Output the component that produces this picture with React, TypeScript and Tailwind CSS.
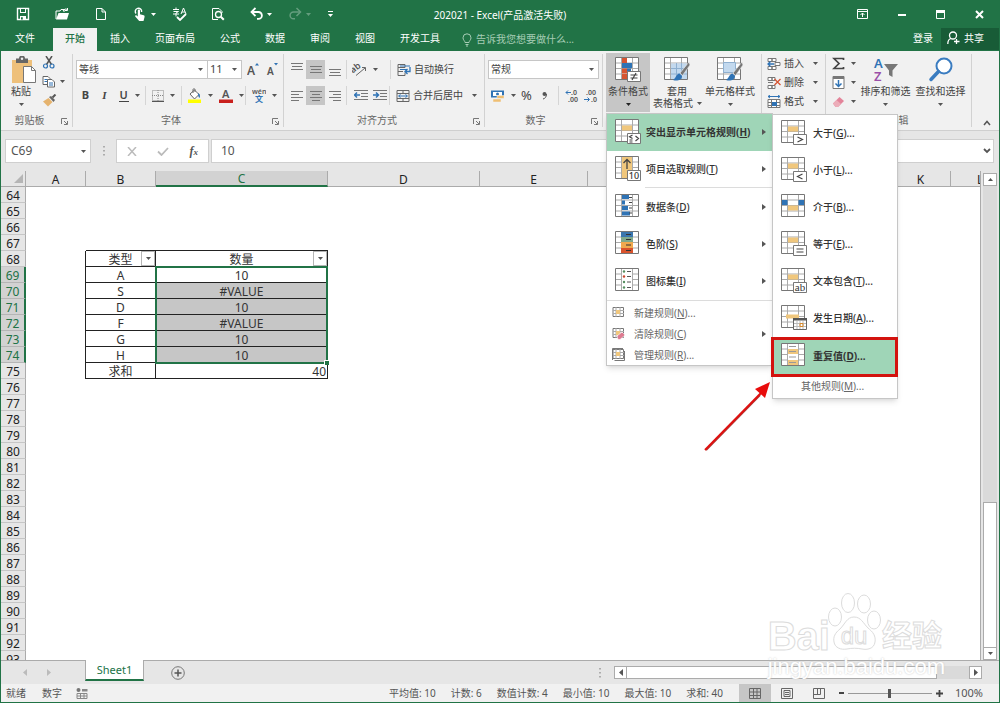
import React from "react";

type Kids = { children?: React.ReactNode };

const Caret = ({ tone = "text-[#555]" }: { tone?: string }) => (
  <svg className={`h-[3px] w-[5px] shrink-0 ${tone}`} viewBox="0 0 5 3" fill="currentColor">
    <path d="M0 0h5L2.500 3z" />
  </svg>
);

const Svg = ({ w, h, children, className = "" }: Kids & { w: number; h: number; className?: string }) => (
  <svg width={w} height={h} viewBox={`0 0 ${w} ${h}`} fill="none" className={`shrink-0 ${className}`}>
    {children}
  </svg>
);

/* ---------- title bar ---------- */

const quick: { label: string; caret?: boolean; dim?: boolean; icon: React.ReactNode }[] = [
  {
    label: "保存",
    icon: (
      <Svg w={14} h={14}>
        <path d="M1.500 1.500h11v11h-11z" stroke="#fff" strokeWidth="1.400" />
        <path d="M4 1h6v5H4zM4 9h6v4H4z" fill="#fff" />
        <path d="M5 2h4v3H5zM5 10.300h1.800v2.200H5z" fill="#217346" />
      </Svg>
    ),
  },
  {
    label: "打开",
    icon: (
      <Svg w={15} h={14}>
        <path d="M1 12V4h4l1-1.500h3V5" stroke="#fff" />
        <path d="M1 12.500 3.500 6H14l-2 6.500z" fill="#fff" />
        <path d="M8 4c1-2 3-2.500 4-1.500M12.500 1v2.500H10" stroke="#fff" />
      </Svg>
    ),
  },
  {
    label: "新建",
    icon: (
      <Svg w={14} h={14}>
        <path d="M2.500 1.500H8l3.500 3.500v7.500h-9z" stroke="#fff" />
        <path d="M8 1.500V5h3.500" stroke="#fff" />
      </Svg>
    ),
  },
  {
    label: "触摸模式",
    caret: true,
    icon: (
      <Svg w={14} h={14}>
        <path d="M3 6.500A3.200 3.200 0 1 1 8.600 5" stroke="#fff" strokeWidth="1.400" />
        <path d="M4.800 3.500c0-1.200 2.200-1.200 2.200 0v3.800l3.700.9c1 .3 1 1.200.8 2L10.500 14H6.200L2.200 9.500c-.3-.9.7-1.400 1.400-1l1.200 1z" fill="#fff" />
      </Svg>
    ),
  },
  {
    label: "拼写检查",
    icon: (
      <Svg w={15} h={14}>
        <path d="M1 2.500h6M4 .5v2M1.500 4.500h5L4 6v3.500M1 7h6M9 7l2.500-6L14 7M10 5h3" stroke="#fff" />
        <path d="m5 10 3 3 6-6" stroke="#fff" strokeWidth="1.800" />
      </Svg>
    ),
  },
  {
    label: "打印预览",
    icon: (
      <Svg w={14} h={14}>
        <path d="M7 12.500H1.500v-11H8l3 3V6" stroke="#fff" />
        <circle cx="7.500" cy="7.500" r="3" stroke="#fff" strokeWidth="1.300" />
        <path d="m9.800 9.800 3 3" stroke="#fff" strokeWidth="2" />
      </Svg>
    ),
  },
  {
    label: "撤消",
    caret: true,
    icon: (
      <Svg w={13} h={14}>
        <path d="M2 5h6.500a3.200 3.200 0 0 1 0 6.800H7" stroke="#fff" strokeWidth="1.800" />
        <path d="M5.500 1 1.500 5l4 4" stroke="#fff" strokeWidth="1.800" />
      </Svg>
    ),
  },
  {
    label: "恢复",
    caret: true,
    dim: true,
    icon: (
      <Svg w={13} h={14} className="opacity-30">
        <path d="M11 5H4.500a3.200 3.200 0 0 0 0 6.800H6" stroke="#fff" strokeWidth="1.500" />
        <path d="m7.500 1 4 4-4 4" stroke="#fff" strokeWidth="1.500" />
      </Svg>
    ),
  },
  {
    label: "自定义快速访问工具栏",
    icon: (
      <Svg w={5} h={7}>
        <path d="M0 .5h5" stroke="#fff" />
        <path d="M0 3h5L2.500 6z" fill="#fff" />
      </Svg>
    ),
  },
];

const windowButtons: { label: string; icon: React.ReactNode }[] = [
  {
    label: "功能区显示选项",
    icon: (
      <Svg w={11} h={10}>
        <path d="M.5.5h10v9H.5zM.5 2.500h10M5.500 8V4M3.500 6l2-2 2 2" stroke="#fff" />
      </Svg>
    ),
  },
  {
    label: "最小化",
    icon: (
      <Svg w={8} h={10}>
        <path d="M0 6h8" stroke="#fff" strokeWidth="2" />
      </Svg>
    ),
  },
  {
    label: "最大化",
    icon: (
      <Svg w={9} h={9}>
        <path d="M.5.5h8v8h-8z" stroke="#fff" />
        <path d="M0 0h9v3H0z" fill="#fff" />
      </Svg>
    ),
  },
  {
    label: "关闭",
    icon: (
      <Svg w={9} h={9}>
        <path d="m1 1 7 7M8 1 1 8" stroke="#fff" strokeWidth="2" />
      </Svg>
    ),
  },
];

function TitleBar() {
  return (
    <header className="grid h-7 grid-cols-[1fr_auto_1fr] items-center">
      <div className="flex items-center pl-[3px]">
        {quick.map((q) => (
          <button key={q.label} aria-label={q.label} className="flex h-7 w-[39px] items-center gap-1 pl-3">
            {q.icon}
            {q.caret && <Caret tone={q.dim ? "text-white/30" : "text-white"} />}
          </button>
        ))}
      </div>
      <h1 className="pt-0.5 text-[10px] leading-4">202021 - Excel(产品激活失败)</h1>
      <div className="flex justify-end">
        {windowButtons.map((b) => (
          <button key={b.label} aria-label={b.label} className="flex h-7 w-[39px] items-center justify-center">
            {b.icon}
          </button>
        ))}
      </div>
    </header>
  );
}

function TabBar() {
  return (
    <nav className="flex h-[23px] items-stretch text-[10px]">
      <button className="w-[52px] pb-0.5 pr-1">文件</button>
      <div className="flex gap-px">
        <button className="bg-[#f1f1f1] px-3 pb-0.5 font-medium text-[#217346]">开始</button>
        {["插入", "页面布局", "公式", "数据", "审阅", "视图", "开发工具"].map((t) => (
          <button key={t} className="px-3 pb-0.5">
            {t}
          </button>
        ))}
      </div>
      <button className="flex items-center gap-1 pl-2.5 text-[#a6cdb5]">
        <Svg w={10} h={14}>
          <path d="M3 9.500C3 8 1 7 1 4.800a4 4 0 0 1 8 0C9 7 7 8 7 9.500zM3.500 11.500h3M4 13h2" stroke="currentColor" />
        </Svg>
        告诉我您想要做什么...
      </button>
      <div className="ml-auto flex items-stretch gap-2">
        <button className="pb-0.5">登录</button>
        <button className="mb-px flex w-[58px] items-center gap-1 bg-[#185c37] pb-0.5 pl-1.5">
          <Svg w={13} h={14}>
            <circle cx="6" cy="4.500" r="3.500" stroke="#fff" strokeWidth="1.300" />
            <path d="M.8 13c0-3 1.500-5 3.200-5.500M9.500 8v5M7 10.500h5.500" stroke="#fff" strokeWidth="1.300" />
          </Svg>
          共享
        </button>
      </div>
    </nav>
  );
}

/* ---------- ribbon ---------- */

const Launcher = () => (
  <button aria-label="更多设置" className="absolute bottom-0.5 right-1 text-[#777]">
    <Svg w={7} h={7}>
      <path d="M.5 6V.5H6M3 3l3 3M6.500 3v3.500H3" stroke="currentColor" />
    </Svg>
  </button>
);

function Group({ label, width, launcher, children }: Kids & { label: string; width: string; launcher?: boolean }) {
  return (
    <section aria-label={label} className={`relative flex flex-col border-r border-[#d2d2d2] ${width}`}>
      <div className="h-[57px]">{children}</div>
      <div className="mt-0.5 text-center text-[10px] leading-[14px] text-[#666]">{label}</div>
      {launcher && <Launcher />}
    </section>
  );
}

function Pick({ label, value, className }: { label: string; value: string; className: string }) {
  return (
    <label className={`relative flex h-[19px] shrink-0 items-center border border-[#c6c6c6] bg-white ${className}`}>
      <select aria-label={label} defaultValue={value} className="h-full w-full appearance-none bg-transparent px-0.5 outline-none">
        <option>{value}</option>
      </select>
      <span className="pointer-events-none absolute right-1 flex">
        <Caret />
      </span>
    </label>
  );
}

const Rule = () => <span className="h-[19px] w-px shrink-0 bg-[#d5d5d5]" />;

function Tool({ label, w = "w-[19px]", on, caret, children }: Kids & { label: string; w?: string; on?: boolean; caret?: boolean }) {
  return (
    <button
      aria-label={label}
      className={`flex h-[19px] shrink-0 items-center justify-center gap-1.5 ${w} ${on ? "bg-[#c6c6c6]" : ""}`}
    >
      {children}
      {caret && <Caret />}
    </button>
  );
}

const Lines = ({ rows }: { rows: [number, number, number][] }) => (
  <Svg w={12} h={13}>
    {rows.map(([x, y, w]) => (
      <path key={y} d={`M${x} ${y}.5h${w}`} stroke="#777" />
    ))}
  </Svg>
);

const Indent = ({ flip }: { flip?: boolean }) => (
  <Svg w={14} h={12}>
    <path d="M0 .5h14M7 3.500h7M7 6.500h7M0 9.500h14" stroke="#777" />
    {flip ? (
      <path d="M0 5h5M3 2.500 5.500 5 3 7.500" stroke="#2f73b5" strokeWidth="1.500" />
    ) : (
      <path d="M1 5h5M3 2.500.5 5 3 7.500" stroke="#2f73b5" strokeWidth="1.500" />
    )}
  </Svg>
);

function Clipboard() {
  return (
    <Group label="剪贴板" width="w-[72px] pr-3.5" launcher>
      <div className="flex pl-2.5 pt-0.5">
        <button className="-mr-1 flex w-7 flex-col items-start text-[10px] leading-3">
          <Svg w={25} h={28}>
            <path d="M1 4h20v23H1z" fill="#eec07b" />
            <path d="M5 2.500h3a3 3 0 0 1 6 0h3V7H5z" fill="#666" />
            <circle cx="11" cy="2.800" r="1.200" fill="#f1f1f1" />
            <path d="M12.500 10.500h8l4 4v12h-12z" fill="#fff" stroke="#777" />
            <path d="M20.500 10.500v4h4" stroke="#777" />
          </Svg>
          <span className="mt-px">粘贴</span>
          <span className="mt-1.5 w-5 pl-2">
            <Caret />
          </span>
        </button>
        <div className="flex flex-col items-start gap-1.5 pl-2.5">
          <button aria-label="剪切">
            <Svg w={14} h={13}>
              <path d="m4 0 5.500 8.500M10 0 4.500 8.500" stroke="#555" strokeWidth="1.500" />
              <circle cx="3.500" cy="10" r="2" stroke="#2f73b5" strokeWidth="1.200" />
              <circle cx="10" cy="10" r="2" stroke="#2f73b5" strokeWidth="1.200" />
            </Svg>
          </button>
          <button aria-label="复制" className="flex items-center gap-1">
            <Svg w={14} h={13}>
              <path d="M1 1.500h5l2 2v6H1z" fill="#fff" stroke="#666" />
              <path d="M2.500 4.500h3M2.500 6.500h3" stroke="#2f73b5" />
              <path d="M5.500 4.500H10l2.500 2.500v5h-7z" fill="#fff" stroke="#666" />
              <path d="M7 8h4M7 10h4" stroke="#2f73b5" />
            </Svg>
            <Caret />
          </button>
          <button aria-label="格式刷">
            <Svg w={15} h={13}>
              <path d="M1 7.500 6.500 4l4 4L6 12.500z" fill="#e5b36e" />
              <path d="m7 3 2-1 4 4-1.500 2z" fill="#666" />
              <path d="m10.500 3.500 3-3" stroke="#555" strokeWidth="2" />
            </Svg>
          </button>
        </div>
      </div>
    </Group>
  );
}

function FontGroup() {
  return (
    <Group label="字体" width="w-[211px] pr-3.5" launcher>
      <div className="flex pl-[3px] pt-1.5">
        <Pick label="字体" value="等线" className="w-[132px] text-[10px]" />
        <Pick label="字号" value="11" className="-ml-px w-[35px] text-[11px]" />
        <Tool label="增大字号" w="ml-0.5 w-[19px]">
          <Svg w={13} h={15}>
            <text x="0" y="13" fontSize="12" fontWeight="600" fill="#555">A</text>
            <path d="m8 3.500 2-2.500 2 2.500z" fill="#2f73b5" />
          </Svg>
        </Tool>
        <Tool label="减小字号">
          <Svg w={13} h={15}>
            <text x="1" y="13" fontSize="10" fontWeight="600" fill="#555">A</text>
            <path d="m8 1 2 2.500L12 1z" fill="#2f73b5" />
          </Svg>
        </Tool>
      </div>
      <div className="flex items-center pl-[3px] pt-[7px] text-[11px] text-[#444]">
        <Tool label="加粗"><b>B</b></Tool>
        <Tool label="倾斜"><i className="font-['Liberation_Serif'] font-bold">I</i></Tool>
        <Tool label="下划线" w="w-[31px]" caret><span className="border-b border-[#444] pr-px font-semibold leading-3">U</span></Tool>
        <span className="w-1" />
        <Rule />
        <Tool label="边框" w="w-[35px]" caret>
          <Svg w={12} h={12}>
            <path d="M.5.5h11v10H.5zM6 0v11M0 5.500h12" stroke="#888" strokeDasharray="1 1" />
            <path d="M0 11.500h12" stroke="#555" />
          </Svg>
        </Tool>
        <Rule />
        <Tool label="填充颜色" w="w-[35px]" caret>
          <Svg w={15} h={15}>
            <path d="m3 6 4.500-4L12 6.500 7.500 11z" fill="#fff" stroke="#666" />
            <path d="M6 5V1.500c0-1 2-1 2 0V4" stroke="#666" />
            <path d="M11 5c2 1 2.500 3 1.500 5-1-1-1.500-2-1.500-5z" fill="#2f73b5" />
            <path d="M1 11.500h13V15H1z" fill="#ff0" />
          </Svg>
        </Tool>
        <Tool label="字体颜色" w="w-7" caret>
          <Svg w={14} h={15}>
            <text x="3" y="10" fontSize="11" fontWeight="600" fill="#555">A</text>
            <path d="M0 11.500h14V15H0z" fill="#c9201d" />
          </Svg>
        </Tool>
        <Rule />
        <Tool label="拼音" w="w-9" caret>
          <Svg w={14} h={15}>
            <text x="0" y="6" fontSize="7" fontWeight="600" fill="#555">wén</text>
            <text x="3" y="14" fontSize="8" fontWeight="700" fill="#2f73b5">文</text>
          </Svg>
        </Tool>
      </div>
    </Group>
  );
}

function AlignGroup() {
  return (
    <Group label="对齐方式" width="w-[201px] pr-3.5" launcher>
      <div className="flex items-center pl-[3px] pt-1.5 text-[10px]">
        <Tool label="顶端对齐"><Lines rows={[[0, 0, 12], [1, 3, 10], [0, 6, 12]]} /></Tool>
        <Tool label="垂直居中" on><Lines rows={[[0, 3, 12], [1, 6, 10], [0, 9, 12]]} /></Tool>
        <Tool label="底端对齐"><Lines rows={[[0, 6, 12], [1, 9, 10], [0, 12, 12]]} /></Tool>
        <span className="w-0.5" />
        <Rule />
        <Tool label="方向" w="w-[35px]" caret>
          <Svg w={15} h={13}>
            <text x="0" y="8" fontSize="9" fontWeight="600" fill="#555" transform="rotate(-38 4 8)">ab</text>
            <path d="M4 12.500 13 5M10 4.500l3.500 0v3.500" stroke="#666" />
          </Svg>
        </Tool>
        <span className="w-2" />
        <Rule />
        <button className="flex items-center gap-[3px] pl-1.5">
          <Svg w={14} h={14}>
            <path d="M1 1.500h7v3H1zM1 4.500v8h7v-3M1 8.500h5" stroke="#666" />
            <path d="M3 3h10M3 6.500h7" stroke="#2f73b5" />
            <path d="M13 4v4.500H8M10.500 6 8 8.500l2.500 2.500" stroke="#2f73b5" strokeWidth="1.300" />
          </Svg>
          自动换行
        </button>
      </div>
      <div className="flex w-[198px] items-center pl-[3px] pt-[7px] text-[10px]">
        <Tool label="左对齐"><Lines rows={[[0, 2, 12], [0, 5, 8], [0, 8, 12], [0, 11, 8]]} /></Tool>
        <Tool label="居中" on><Lines rows={[[0, 2, 12], [2, 5, 8], [0, 8, 12], [2, 11, 8]]} /></Tool>
        <Tool label="右对齐"><Lines rows={[[0, 2, 12], [4, 5, 8], [0, 8, 12], [4, 11, 8]]} /></Tool>
        <span className="w-0.5" />
        <Rule />
        <span className="w-1" />
        <Tool label="减少缩进量"><Indent /></Tool>
        <Tool label="增加缩进量"><Indent flip /></Tool>
        <Rule />
        <button className="flex items-center gap-[3px] whitespace-nowrap pl-1.5">
          <Svg w={14} h={14}>
            <path d="M1 1.500h12v11H1zM1 4.500h12M1 9.500h12M7 1.500v3M7 9.500v3" stroke="#666" />
            <path d="M3 7h8" stroke="#2f73b5" />
            <path d="m4.500 5.500-2 1.500 2 1.500M9.500 5.500l2 1.500-2 1.500" stroke="#2f73b5" />
          </Svg>
          合并后居中
          <span className="pl-1.5"><Caret /></span>
        </button>
      </div>
    </Group>
  );
}

const Decimals = ({ inc }: { inc?: boolean }) => (
  <Svg w={14} h={14}>
    <text x={inc ? 6 : 2} y="6" fontSize="7" fontWeight="600" fill="#555">{inc ? ".0" : ".00"}</text>
    <text x={inc ? 3 : 7} y="13" fontSize="7" fontWeight="600" fill="#555">{inc ? ".00" : ".0"}</text>
    {inc ? (
      <path d="M1 3.500h5M3 1.500l-2 2 2 2" stroke="#2f73b5" />
    ) : (
      <path d="M0 10.500h5M3.500 8.500l2 2-2 2" stroke="#2f73b5" />
    )}
  </Svg>
);

function NumberGroup() {
  return (
    <Group label="数字" width="w-[118px] pr-4" launcher>
      <div className="pl-[3px] pt-1.5">
        <Pick label="数字格式" value="常规" className="w-[111px] text-[10px]" />
      </div>
      <div className="flex w-[114px] items-center pl-1 pt-[7px] text-[#444]">
        <Tool label="会计数字格式" w="w-7" caret>
          <Svg w={15} h={14}>
            <path d="M1 1.500h13v7H1z" fill="#2f73b5" />
            <path d="M3 3h9v4H3z" fill="#fff" />
            <circle cx="7.500" cy="5" r="1.500" fill="#2f73b5" />
            <path d="M7 6.500h7v3H7zM3 10h8v3H3z" fill="#efbf73" stroke="#f1f1f1" strokeWidth=".5" />
          </Svg>
        </Tool>
        <Tool label="百分比"><span className="text-[13px]">%</span></Tool>
        <Tool label="千位分隔" w="w-4">
          <Svg w={5} h={8}>
            <circle cx="2.500" cy="2" r="2" fill="#555" />
            <path d="M4.500 2C4.500 5 3 6.500 1 7" stroke="#555" />
          </Svg>
        </Tool>
        <span className="w-1.5 shrink-0" />
        <Rule />
        <span className="w-[3px] shrink-0" />
        <Tool label="增加小数位"><Decimals inc /></Tool>
        <Tool label="减少小数位"><Decimals /></Tool>
      </div>
    </Group>
  );
}

/* grid picture shared by the style buttons and the menus */
function Sheet({ children, size = 26 }: Kids & { size?: number }) {
  return (
    <svg width={size} height={size} viewBox="0 0 26 26" fill="none" className="shrink-0">
      <path d="M.5.5h23v22H.5z" fill="#fff" />
      <path d="M6.500 1v21M17.500 1v21M1 6h22M1 11.500h22M1 17h22" stroke="#aaa" />
      <path d="M.5.5h23v22H.5z" stroke="#777" />
      {children}
    </svg>
  );
}

const Mid = () => <path d="M7 6.500h10v5H7z" fill="#f0c77d" />;

const BadgeBox = () => <path d="M12.500 14.500h13v10h-13z" fill="#fff" stroke="#777" />;

const Badge = ({ t, serif }: { t: string; serif?: boolean }) => (
  <>
    <BadgeBox />
    <text x="19" y="23" fontSize={serif ? 11 : 9} textAnchor="middle" fill="#333" fontWeight="500" fontFamily={serif ? "Liberation Serif" : undefined}>
      {t}
    </text>
  </>
);

const Sign = ({ d }: { d: string }) => (
  <>
    <BadgeBox />
    <path d={d} stroke="#444" strokeWidth="1.200" />
  </>
);

const Brush = () => (
  <>
    <path d="m25 5-9 11 2.500 2.500L26 8z" fill="#777" stroke="#f1f1f1" strokeWidth=".6" />
    <path d="M15.500 16.500c-3 0-3 4-6.500 6.500 4 1.500 9 0 9-4z" fill="#2f73b5" />
  </>
);

const K = ({ pre, k, post }: { pre: string; k: string; post: string }) => (
  <span>
    {pre}(<u className="underline-offset-1">{k}</u>){post}
  </span>
);

const Arrow = () => (
  <svg className="ml-auto h-1.5 w-1 shrink-0" viewBox="0 0 4 6" fill="#555">
    <path d="M0 0v6l4-3z" />
  </svg>
);

const ruleItems = [
  { pre: "突出显示单元格规则", k: "H", icon: <Sheet><Mid /><Sign d="m17.500 16-3 1.800 3 1.800M14.500 21h3M14.500 23h3M20.500 17l3 2.500-3 2.500" /></Sheet> },
  {
    pre: "项目选取规则",
    k: "T",
    icon: (
      <Sheet>
        <path d="M7 1h10v21H7z" fill="#f0c77d" />
        <path d="M12 13V4M8.500 7 12 3.500 15.500 7" stroke="#444" strokeWidth="1.300" />
        <Badge t="10" />
      </Sheet>
    ),
  },
];

const scaleItems = [
  {
    pre: "数据条",
    k: "D",
    icon: (
      <Sheet>
        <path d="M7 1h7v4H7zM7 6.500h3v4H7zM7 12h6v4H7zM7 17.500h8v4H7z" fill="#2f73b5" />
        <path d="M14 3.500h3M14 8.500h3M14 14h3M14 19h3" stroke="#444" />
      </Sheet>
    ),
  },
  {
    pre: "色阶",
    k: "S",
    icon: (
      <Sheet>
        <path d="M6 1h12v5H6z" fill="#3a76ae" />
        <path d="M6 6h12v5H6z" fill="#7fa88b" />
        <path d="M6 11h12v6H6z" fill="#f0a94e" />
        <path d="M6 17h12v5H6z" fill="#d9532c" />
        <path d="M11 3.500h5M11 8.500h5M11 14h5M11 19.500h5" stroke="#333" />
      </Sheet>
    ),
  },
  {
    pre: "图标集",
    k: "I",
    icon: (
      <Sheet>
        <path d="M7 1h10v21H7z" fill="#fff" />
        <path d="M12 3.500h4M12 8.500h4M12 14h4M12 19.500h4" stroke="#555" />
        <circle cx="9" cy="3.500" r="1.200" fill="#548f5f" />
        <circle cx="9" cy="8.500" r="1.200" fill="#c9452b" />
        <circle cx="9" cy="14" r="1.200" fill="#548f5f" />
        <circle cx="9" cy="19.500" r="1.200" fill="#548f5f" />
      </Sheet>
    ),
  },
];

const MiniGrid = ({ children }: Kids) => (
  <Svg w={13} h={13}>
    <path d="M1 1.500h10.500v9H1z" fill="#fff" stroke="#777" />
    <path d="M4 1v10M8 1v10M1 4.500h11M1 7.500h11" stroke="#aaa" />
    <path d="M4 4h4v4H4z" fill="#f0c77d" />
    {children}
  </Svg>
);

const manageItems = [
  { pre: "新建规则", k: "N", post: "...", sub: false, icon: <MiniGrid /> },
  {
    pre: "清除规则",
    k: "C",
    post: "",
    sub: true,
    icon: (
      <MiniGrid>
        <path d="m5 9 5-4 3 3-5 4.500H6z" fill="#dd7a90" stroke="#fff" strokeWidth=".6" />
      </MiniGrid>
    ),
  },
  {
    pre: "管理规则",
    k: "R",
    post: "...",
    sub: false,
    icon: (
      <MiniGrid>
        <path d="M.5 12V.5H11M2.500 12.500h10V3" stroke="#777" />
      </MiniGrid>
    ),
  },
];

const highlightItems = [
  { pre: "大于", k: "G", icon: <Sheet><Mid /><Sign d="m16.500 17 5 2.500-5 2.500" /></Sheet> },
  { pre: "小于", k: "L", icon: <Sheet><Mid /><Sign d="m21.500 17-5 2.500 5 2.500" /></Sheet> },
  {
    pre: "介于",
    k: "B",
    icon: (
      <Sheet>
        <path d="M1 6h5.500v5H1zM17.500 6H23v5h-5.500z" fill="#2f73b5" />
        <path d="M7 11.500h10v5H7z" fill="#f0c77d" />
      </Sheet>
    ),
  },
  { pre: "等于", k: "E", icon: <Sheet><Mid /><Sign d="M15.500 18h7M15.500 21h7" /></Sheet> },
  { pre: "文本包含", k: "T", icon: <Sheet><Mid /><Badge t="ab" serif /></Sheet> },
  {
    pre: "发生日期",
    k: "A",
    icon: (
      <Sheet>
        <path d="M5 9.500h13v4H5z" fill="#f0c77d" />
        <path d="M12.500 13.500h13v11h-13z" fill="#fff" stroke="#666" />
        <path d="M12 13h14v2.500H12z" fill="#555" />
        <path d="M16 16v8M19 16v8M22 16v8M13 18.500h12M13 21.500h12" stroke="#bbb" />
        <path d="M19 18.500h3v3h-3z" stroke="#d98a2b" />
      </Sheet>
    ),
  },
  {
    pre: "重复值",
    k: "D",
    icon: (
      <Sheet>
        <path d="M7 1h10v21H7z" fill="#fff" />
        <path d="M7 6h10v5H7zM7 17h10v5H7z" fill="#f0c77d" />
        <path d="M8 3.500h7M8 8.500h7M8 14h7M8 19.500h7" stroke="#999" />
      </Sheet>
    ),
  },
];

function SubMenu() {
  return (
    <div className="absolute left-full top-0 w-[126px] border border-[#c6c6c6] bg-white shadow-md">
      {highlightItems.map((it, i) =>
        i === highlightItems.length - 1 ? (
          <button
            key={it.k}
            role="menuitem"
            className="-mx-0.5 flex h-10 w-[127px] items-center gap-1.5 whitespace-nowrap border-[3px] border-[#d3130f] bg-[#9fd5b7] pb-0.5 pl-[7px] font-bold"
          >
            {it.icon}
            <K pre={it.pre} k={it.k} post="..." />
          </button>
        ) : (
          <button key={it.k} role="menuitem" className="flex h-[37px] w-full items-center gap-1.5 whitespace-nowrap pb-0.5 pl-2 font-medium">
            {it.icon}
            <K pre={it.pre} k={it.k} post="..." />
          </button>
        ),
      )}
      <button role="menuitem" className="flex h-[21px] items-start pl-7 pt-px text-[#666]">
        <K pre="其他规则" k="M" post="..." />
      </button>
      <svg className="pointer-events-none absolute right-full top-[266px] h-[72px] w-[70px]" viewBox="0 0 70 72">
        <path d="M3 69 57 14" stroke="#a8403c" strokeWidth="2" />
        <path d="M2 69 58 12" stroke="#e01010" strokeWidth="2" />
        <path d="M67 1 62 17 52 8z" fill="#e80c0c" />
      </svg>
    </div>
  );
}

function RulesMenu() {
  return (
    <div role="menu" className="absolute left-0 top-full z-20 w-[167px] border border-[#c6c6c6] bg-white text-[10px] leading-4 text-[#333] shadow-md">
      {ruleItems.map((it, i) => (
        <button
          key={it.k}
          role="menuitem"
          className={`flex h-[37px] w-full items-center gap-[5px] whitespace-nowrap pb-0.5 pl-2 pr-1.5 ${i === 0 ? "bg-[#9fd5b7] font-bold" : "font-medium"}`}
        >
          {it.icon}
          <K pre={it.pre} k={it.k} post="" />
          <Arrow />
        </button>
      ))}
      <hr className="-mt-px ml-[38px] border-[#dcdcdc]" />
      {scaleItems.map((it) => (
        <button key={it.k} role="menuitem" className="flex h-[37px] w-full items-center gap-[5px] pl-2 pr-1.5 font-medium">
          {it.icon}
          <K pre={it.pre} k={it.k} post="" />
          <Arrow />
        </button>
      ))}
      <hr className="mb-px mt-px border-[#dcdcdc]" />
      {manageItems.map((it) => (
        <button key={it.k} role="menuitem" className="flex h-[21px] w-full items-center gap-[9px] pl-[5px] pr-1.5 text-[#666]">
          {it.icon}
          <K pre={it.pre} k={it.k} post={it.post} />
          {it.sub && <Arrow />}
        </button>
      ))}
      <SubMenu />
    </div>
  );
}

function StylesGroup() {
  return (
    <section aria-label="样式" className="flex w-[159px] border-r border-[#d2d2d2] pl-[3px] text-[10px] leading-3">
      <div className="relative h-[59px]">
        <button className="-mt-px flex h-[59px] w-11 flex-col items-center bg-[#c6c6c6] pt-1" aria-expanded="true">
          <Sheet>
            <path d="M7 1h5v5H7zM7 11.500h5v5H7z" fill="#d65532" />
            <path d="M7 6h10v5H7zM12 11.500h4v5h-4z" fill="#2f73b5" />
            <path d="M7 17h5v5H7z" fill="#d65532" />
            <Sign d="M15.500 18h7M15.500 21h7M21 16l-4 7" />
          </Sheet>
          <span className="mt-0.5 whitespace-nowrap">条件格式</span>
          <span className="mt-1.5"><Caret tone="text-[#222]" /></span>
        </button>
        <RulesMenu />
      </div>
      <button className="flex w-[54px] flex-col items-center whitespace-nowrap pt-[3px]">
        <Sheet>
          <path d="M7 6.500h16v15.500H7z" fill="#c3d9ee" />
          <path d="M12.500 6v16M17.500 6v16M7 11.500h16M7 17h16" stroke="#8fb0d0" />
          <Brush />
        </Sheet>
        <span className="mt-0.5">套用</span>
        <span className="flex items-center gap-1 pl-px">表格格式 <Caret /></span>
      </button>
      <button className="flex w-[52px] flex-col items-center whitespace-nowrap pt-[3px]">
        <Sheet>
          <path d="M6.500 5.500h12v10h-12z" fill="#c3d9ee" stroke="#8fb0d0" />
          <Brush />
        </Sheet>
        <span className="mt-0.5">单元格样式</span>
        <span className="mt-1.5"><Caret /></span>
      </button>
    </section>
  );
}

const cellTools = [
  {
    t: "插入",
    icon: (
      <Svg w={14} h={14}>
        <path d="M1 1.500h4v3H1zM5 1.500h4v3H5zM1 9.500h4v3H1zM5 9.500h4v3H5zM8 5.500h5v3H8z" fill="#fff" stroke="#777" />
        <path d="M1 7h6M3.500 4.500 1 7l2.500 2.500" stroke="#2f73b5" strokeWidth="1.300" />
      </Svg>
    ),
  },
  {
    t: "删除",
    icon: (
      <Svg w={14} h={14}>
        <path d="M1 1.500h4v3H1zM5 1.500h3v3H5zM1 9.500h4v3H1zM5 9.500h3v3H5zM1 6.500h5" fill="#fff" stroke="#777" />
        <path d="m7.500 3 6 6M13.500 3l-6 6" stroke="#d65532" strokeWidth="1.300" />
      </Svg>
    ),
  },
  {
    t: "格式",
    icon: (
      <Svg w={14} h={14}>
        <path d="M1 1.500h12M3 0 1 1.500 3 3M11 0l2 1.500L11 3" stroke="#2f73b5" />
        <path d="M1 4.500h12v8H1zM1 7.500h12M1 10.500h12M4.500 4.500v8M9.500 4.500v8" fill="#fff" stroke="#777" />
        <path d="M5 7h5v4H5z" fill="#2f73b5" />
      </Svg>
    ),
  },
];

function Ribbon() {
  return (
    <div className="flex h-20 border-b border-[#cfcfcf] bg-[#f1f1f1] py-[3px] text-[#444]">
      <Clipboard />
      <FontGroup />
      <AlignGroup />
      <NumberGroup />
      <StylesGroup />
      <Group label="" width="w-16">
        <div className="flex flex-col items-start text-[10px]">
          {cellTools.map((c) => (
            <button key={c.t} className="flex h-[19px] items-center gap-[3px] pl-[5px]">
              {c.icon}
              {c.t}
              <span className="pl-1.5"><Caret /></span>
            </button>
          ))}
        </div>
      </Group>
      <Group label="编辑" width="w-[146px]">
        <div className="flex text-[10px] leading-3">
          <div className="flex w-8 flex-col pl-1">
            <Tool label="自动求和" w="w-7" caret>
              <Svg w={13} h={13}>
                <path d="M11.500 3V1.500H2l5 5-5 5h9.500V10" stroke="#444" strokeWidth="1.700" />
              </Svg>
            </Tool>
            <Tool label="填充" w="w-7" caret>
              <Svg w={13} h={13}>
                <path d="M1 .5h11v12H1z" fill="#fff" stroke="#777" />
                <path d="M1 2h11" stroke="#777" strokeWidth="2" />
                <path d="M6.500 4v6.500M3.500 7.500l3 3 3-3" stroke="#2f73b5" strokeWidth="1.500" />
              </Svg>
            </Tool>
            <Tool label="清除" w="w-7" caret>
              <Svg w={13} h={13}>
                <path d="M1 8.500 7.500 2 12 6l-6 6H3.500z" fill="#e3849a" />
                <path d="M1 8.500 4.500 5 9 9l-3 3H3.500z" fill="#ecadb9" />
              </Svg>
            </Tool>
          </div>
          <button className="flex w-[55px] flex-col items-center whitespace-nowrap pt-[3px]">
            <Svg w={26} h={26}>
              <text x="1" y="11" fontSize="13" fontWeight="600" fill="#2f73b5">A</text>
              <text x="1" y="24" fontSize="13" fontWeight="600" fill="#9a4fa8">Z</text>
              <path d="M11 7h14l-5.500 6.500V20L16 18v-4.500z" fill="#777" />
            </Svg>
            <span className="mt-0.5">排序和筛选</span>
            <span className="mt-1.5"><Caret /></span>
          </button>
          <button className="flex w-[55px] flex-col items-center whitespace-nowrap pt-[3px]">
            <Svg w={26} h={26}>
              <circle cx="16" cy="9" r="7.500" fill="#fff" stroke="#3a7cc0" strokeWidth="2" />
              <path d="M10.500 14.500 3 22.500" stroke="#3a7cc0" strokeWidth="3.500" strokeLinecap="round" />
            </Svg>
            <span className="mt-0.5">查找和选择</span>
            <span className="mt-1.5"><Caret /></span>
          </button>
        </div>
      </Group>
      <button aria-label="折叠功能区" className="ml-auto flex w-6 items-end justify-center pb-px">
        <Svg w={8} h={6}>
          <path d="m1 5 3-3.500L7 5" stroke="#555" strokeWidth="1.500" />
        </Svg>
      </button>
    </div>
  );
}

/* ---------- formula bar ---------- */

const Dots = () => (
  <Svg w={2} h={10}>
    <path d="M1 0v10" stroke="#999" strokeWidth="1.500" strokeDasharray="1.500 2.500" />
  </Svg>
);

function FormulaBar() {
  return (
    <div className="flex h-10 items-center bg-[#e6e6e6] pl-1 pr-[5px] text-[#555]">
      <div className="flex h-6 w-[86px] items-center border border-[#cfcfcf] bg-white pr-1">
        <input aria-label="名称框" defaultValue="C69" className="w-0 flex-1 bg-transparent pl-[5px] text-[12px] outline-none" />
        <Caret />
      </div>
      <span className="flex w-[25px] justify-center"><Dots /></span>
      <div className="flex h-6 w-[93px] items-center justify-between border border-[#cfcfcf] bg-white px-2.5">
        <button aria-label="取消">
          <Svg w={10} h={9}><path d="m1 0 8 9M9 0 1 9" stroke="#bbb" strokeWidth="1.500" /></Svg>
        </button>
        <button aria-label="输入">
          <Svg w={12} h={9}><path d="m1 4.500 3.500 3.500L11 1" stroke="#bbb" strokeWidth="1.800" /></Svg>
        </button>
        <button aria-label="插入函数" className="font-['Liberation_Serif'] text-[12px] font-bold italic">
          f<span className="text-[9px]">x</span>
        </button>
      </div>
      <div className="ml-0.5 flex h-6 flex-1 items-center border border-[#cfcfcf] bg-white pr-0.5">
        <input aria-label="编辑栏" defaultValue="10" className="w-0 flex-1 bg-transparent pl-[9px] text-[12px] outline-none" />
        <Svg w={8} h={6}><path d="m1 1 3 3 3-3" stroke="#555" strokeWidth="1.800" /></Svg>
      </div>
    </div>
  );
}

/* ---------- worksheet ---------- */

const columns = ["A", "B", "C", "D", "E", "F", "G", "H", "I", "J", "K", "L"];
const rows = Array.from({ length: 30 }, (_, i) => 64 + i);
const data: Record<number, [string, string]> = {
  68: ["类型", "数量"],
  69: ["A", "10"],
  70: ["S", "#VALUE"],
  71: ["D", "10"],
  72: ["F", "#VALUE"],
  73: ["G", "10"],
  74: ["H", "10"],
  75: ["求和", "40"],
};

const FilterButton = ({ label }: { label: string }) => (
  <button aria-label={label} className="absolute right-0 top-0 flex h-[15px] w-3.5 items-center justify-center border border-[#b5b5b5] bg-white">
    <Caret />
  </button>
);

function Cell({ row, col }: { row: number; col: string }) {
  const pair = data[row];
  if (col === "A") return <td className={pair ? "border-r border-[#222]" : ""} />;
  if (col !== "B" && col !== "C") return <td />;
  if (!pair) return <td className={row === 67 ? "border-b border-[#222]" : ""} />;
  const text = pair[col === "B" ? 0 : 1];
  const shaded = col === "C" && row > 69 && row < 75;
  const align = col === "C" && row === 75 ? "text-right pr-px" : "text-center";
  return (
    <td className={`relative border-b border-r border-[#222] pt-0.5 text-[#333] ${align} ${shaded ? "bg-[#c6c6c6]" : ""}`}>
      {text}
      {row === 68 && <FilterButton label={`筛选${text}`} />}
      {col === "C" && row === 69 && (
        <span className="pointer-events-none absolute -left-px -right-px -top-px z-10 h-[98px] border-2 border-[#217346]">
          <span className="absolute -bottom-[3px] -right-[3px] h-[5px] w-[5px] border-l border-t border-white bg-[#217346]" />
        </span>
      )}
    </td>
  );
}

function Worksheet() {
  return (
    <div className="flex min-h-0 flex-1 bg-[#e6e6e6]">
      <div className="min-w-0 flex-1 overflow-hidden border-r border-[#ababab] bg-white">
        <table className="w-full table-fixed border-separate border-spacing-0 text-[12px] leading-[13px] text-[#222]">
          <colgroup>
            <col className="w-[25px]" />
            <col className="w-[60px]" />
            <col className="w-[70px]" />
            <col className="w-[172px]" />
            <col className="w-[152px]" />
            <col className="w-[108px]" />
            <col className="w-[61px]" />
            <col className="w-[61px]" />
            <col className="w-[61px]" />
            <col className="w-[60px]" />
            <col className="w-[60px]" />
            <col className="w-[60px]" />
            <col />
          </colgroup>
          <thead>
            <tr className="h-4 bg-[#e6e6e6]">
              <th className="border-b border-r border-[#ababab] p-0">
                <Svg w={9} h={9} className="ml-auto mr-0.5"><path d="M9 0v9H0z" fill="#b5b5b5" /></Svg>
              </th>
              {columns.map((c) => (
                <th
                  key={c}
                  scope="col"
                  className={
                    c === "C"
                      ? "border-b-2 border-r border-b-[#217346] border-r-[#ababab] bg-[#d2d2d2] p-0 pt-px font-normal text-[#217346]"
                      : c === "L"
                        ? "overflow-hidden border-b border-[#ababab] p-0 pl-[26px] pt-0.5 text-left font-normal"
                        : "border-b border-r border-[#ababab] p-0 pt-0.5 font-normal"
                  }
                >
                  {c}
                </th>
              ))}
            </tr>
          </thead>
          <tbody>
            {rows.map((r) => (
              <tr key={r} className="h-4">
                <th
                  scope="row"
                  className={
                    r >= 69 && r <= 74
                      ? "border-b border-r-2 border-b-[#b5b5b5] border-r-[#217346] bg-[#d2d2d2] p-0 pt-0.5 font-normal text-[#217346]"
                      : "border-b border-r border-b-[#c6c6c6] border-r-[#ababab] bg-[#e6e6e6] p-0 pt-0.5 font-normal"
                  }
                >
                  {r}
                </th>
                {columns.map((c) => (
                  <Cell key={c} row={r} col={c} />
                ))}
              </tr>
            ))}
          </tbody>
        </table>
      </div>
      <div className="flex w-[18px] flex-col px-0.5 pt-0.5">
        <button aria-label="向上滚动" className="flex h-[13px] w-3.5 shrink-0 items-center justify-center border border-[#ababab] bg-white">
          <span className="rotate-180"><Caret /></span>
        </button>
        <div className="flex w-3.5 flex-1 flex-col justify-end bg-[#dadada]">
          <div className="h-[146px] border border-[#ababab] bg-white" />
        </div>
        <button aria-label="向下滚动" className="-mt-px flex h-[13px] w-3.5 shrink-0 items-center justify-center border border-[#ababab] bg-white">
          <Caret />
        </button>
      </div>
    </div>
  );
}

const Side = ({ left, tone }: { left?: boolean; tone: string }) => (
  <svg className={`h-[7px] w-1 ${tone}`} viewBox="0 0 4 7" fill="currentColor">
    <path d={left ? "M4 0v7L0 3.500z" : "M0 0v7l4-3.500z"} />
  </svg>
);

function SheetTabs() {
  return (
    <div className="flex h-6 items-stretch border-t border-[#ababab] bg-[#e6e6e6]">
      <div className="flex w-[84px] items-center gap-5 pl-[22px]">
        <button aria-label="上一张"><Side left tone="text-[#bbb]" /></button>
        <button aria-label="下一张"><Side tone="text-[#bbb]" /></button>
      </div>
      <button className="-mt-px mb-[3px] w-[59px] border-x border-b-2 border-x-[#ababab] border-b-[#217346] bg-white pt-0.5 text-[11px] text-[#217346]">Sheet1</button>
      <button aria-label="新工作表" className="ml-[27px] flex items-center">
        <Svg w={14} h={14}>
          <circle cx="7" cy="7" r="6.300" stroke="#777" />
          <path d="M7 3.500v7M3.500 7h7" stroke="#555" strokeWidth="1.500" />
        </Svg>
      </button>
      <div className="ml-auto flex items-center pr-[17px]">
        <Dots />
        <div className="ml-[13px] flex h-[13px] w-[368px] bg-[#dadada]">
          <button aria-label="向左滚动" className="flex w-[13px] items-center justify-center border border-[#ababab] bg-white"><Side left tone="text-[#555]" /></button>
          <div className="-ml-px w-[311px] border border-[#ababab] bg-white" />
          <button aria-label="向右滚动" className="ml-auto flex w-[13px] items-center justify-center border border-[#ababab] bg-white"><Side tone="text-[#555]" /></button>
        </div>
      </div>
    </div>
  );
}

function StatusBar() {
  return (
    <footer className="flex h-[18px] items-center bg-[#f1f1f1] pl-[5px] text-[10px] leading-4 text-[#555]">
      <span>就绪</span>
      <span className="ml-4">数字</span>
      <Svg w={12} h={11} className="ml-3.5">
        <circle cx="2.500" cy="2" r="2" fill="#777" />
        <path d="M6 1h5.500v2.500H6z" fill="#888" />
        <path d="M1 5.500h10v5H1zM1 8h10M4.500 5.500v5M8 5.500v5" stroke="#888" />
      </Svg>
      <div className="ml-auto flex gap-[15px]">
        {["平均值: 10", "计数: 6", "数值计数: 4", "最小值: 10", "最大值: 10", "求和: 40"].map((s) => (
          <span key={s}>{s}</span>
        ))}
      </div>
      <button aria-label="普通" className="ml-4 flex h-full w-8 items-center justify-center bg-[#c6c6c6]">
        <Svg w={12} h={11}><path d="M.5.5h11v10H.5zM0 4h12M0 7.500h12M4.500 0v11M8 0v11" stroke="#666" /></Svg>
      </button>
      <button aria-label="页面布局" className="flex w-8 justify-center">
        <Svg w={12} h={11}><path d="M.5.5h11v10H.5zM3 2.500h6v6H3zM4 4.500h4M4 6.500h4" stroke="#666" /></Svg>
      </button>
      <button aria-label="分页预览" className="flex w-8 justify-center">
        <Svg w={12} h={11}><path d="M.5.5h11v10H.5zM.5 6.500h7v-6M4.500.5v6" stroke="#666" /></Svg>
      </button>
      <button aria-label="缩小" className="ml-1"><Svg w={5} h={6}><path d="M0 3h5" stroke="#444" strokeWidth="2" /></Svg></button>
      <input
        type="range"
        aria-label="显示比例"
        defaultValue={50}
        className="mx-1 h-3 w-[84px] appearance-none bg-transparent [&::-webkit-slider-runnable-track]:h-px [&::-webkit-slider-runnable-track]:bg-[#999] [&::-webkit-slider-thumb]:-mt-1 [&::-webkit-slider-thumb]:h-[9px] [&::-webkit-slider-thumb]:w-[3px] [&::-webkit-slider-thumb]:appearance-none [&::-webkit-slider-thumb]:bg-[#555]"
      />
      <button aria-label="放大"><Svg w={7} h={7}><path d="M0 3.500h7M3.500 0v7" stroke="#444" strokeWidth="1.800" /></Svg></button>
      <span className="ml-3 mr-4 text-[11px]">100%</span>
    </footer>
  );
}

function Watermark() {
  return (
    <div className="pointer-events-none absolute bottom-[22px] right-[54px] z-10 text-white [-webkit-text-stroke:1px_#dcdcdc]">
      <div className="flex items-end font-['Liberation_Sans','Noto_Sans_CJK_SC',sans-serif] font-bold">
        <span className="text-[40px] leading-10">Bai</span>
        <svg width="54" height="60" viewBox="0 0 54 60" fill="#fff" stroke="#dcdcdc" className="-ml-0.5 mb-1 shrink-0">
          <ellipse cx="7" cy="25" rx="6.500" ry="9" />
          <ellipse cx="20" cy="11" rx="6.500" ry="9.500" />
          <ellipse cx="36" cy="12" rx="6.500" ry="9" />
          <ellipse cx="46" cy="28" rx="6.500" ry="9" />
          <path d="M26 25c7 0 9 6 14 11 5 4 8 8 7 14-1 7-8 8-13 7-5-1-10-1-15 0-6 1-12-1-13-7-1-5 1-9 6-13 5-5 7-12 14-12z" />
          <text x="26" y="52" fontSize="24" textAnchor="middle" fontWeight="400">du</text>
        </svg>
        <span className="text-[30px] leading-10">经验</span>
      </div>
      <div className="-mt-0.5 font-['Liberation_Sans',sans-serif] text-[22px] leading-[26px] [-webkit-text-stroke:0px] [text-shadow:0_0_2px_#c4c4c4]">jingyan.baidu.com</div>
    </div>
  );
}

export default function App() {
  return (
    <div className="relative flex h-screen flex-col overflow-hidden border-x border-b border-[#217346] bg-[#217346] font-['Noto_Sans','Noto_Sans_CJK_SC',sans-serif] text-white">
      <TitleBar />
      <TabBar />
      <Ribbon />
      <FormulaBar />
      <Worksheet />
      <SheetTabs />
      <StatusBar />
      <Watermark />
    </div>
  );
}
